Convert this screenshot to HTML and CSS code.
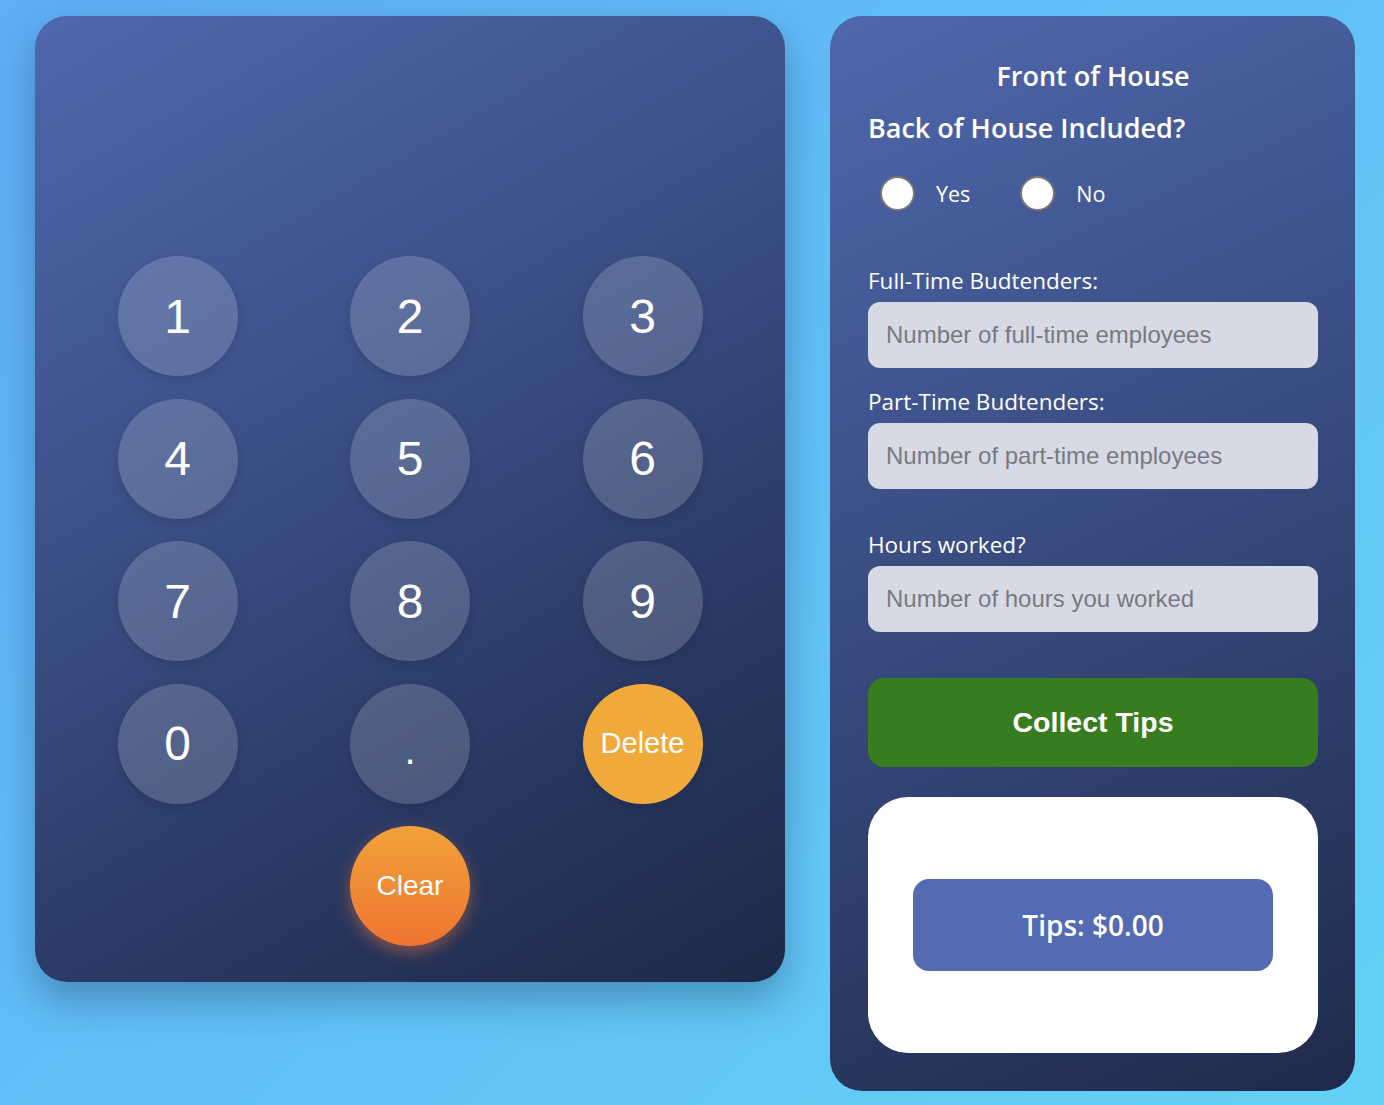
FILE: index.html
```html
<!DOCTYPE html>
<html lang="en">
<head>
<meta charset="utf-8">
<title>Tip Calculator</title>
<link rel="stylesheet" href="styles.css">
</head>
<body>
<main class="app">
  <section class="keypad-panel">
    <div class="display"></div>
    <div class="keypad">
      <button class="key">1</button>
      <button class="key">2</button>
      <button class="key">3</button>
      <button class="key">4</button>
      <button class="key">5</button>
      <button class="key">6</button>
      <button class="key">7</button>
      <button class="key">8</button>
      <button class="key">9</button>
      <button class="key">0</button>
      <button class="key key-dot">.</button>
      <button class="key key-delete">Delete</button>
      <span class="spacer"></span>
      <button class="key key-clear">Clear</button>
    </div>
  </section>

  <section class="form-panel">
    <h1 class="title">Front of House</h1>
    <h2 class="question">Back of House Included?</h2>
    <div class="radios">
      <label class="radio"><span class="radio-dot"></span>Yes</label>
      <label class="radio"><span class="radio-dot"></span>No</label>
    </div>

    <label class="field-label field-first">Full-Time Budtenders:</label>
    <input class="field" type="text" placeholder="Number of full-time employees">

    <label class="field-label">Part-Time Budtenders:</label>
    <input class="field" type="text" placeholder="Number of part-time employees">

    <label class="field-label field-hours">Hours worked?</label>
    <input class="field" type="text" placeholder="Number of hours you worked">

    <button class="collect">Collect Tips</button>

    <div class="result">
      <div class="tips">Tips: $0.00</div>
    </div>
  </section>
</main>
</body>
</html>
```

FILE: styles.css
```css
* { box-sizing: border-box; }

html, body {
  margin: 0;
  padding: 0;
}

body {
  min-height: 1105px;
  background: linear-gradient(135deg, #60aef6 0%, #62c4f6 60%, #64d1f5 100%);
  font-family: "Open Sans", "Noto Sans", sans-serif;
}

.app {
  display: flex;
  align-items: flex-start;
  gap: 45px;
  padding: 16px 29px 14px 35px;
}

/* ---------- keypad panel ---------- */
.keypad-panel {
  width: 750px;
  height: 966px;
  border-radius: 32px;
  padding: 40px 0 36px;
  background: linear-gradient(150deg, #4f68ad 0%, #3c5087 40%, #2b3a66 70%, #1e2948 100%);
  box-shadow: 0 18px 40px rgba(20, 40, 80, 0.35);
}

.display {
  height: 200px;
}

.keypad {
  display: grid;
  grid-template-columns: repeat(3, 232.5px);
  row-gap: 22.5px;
  justify-content: center;
  justify-items: center;
}

.key {
  width: 120px;
  height: 120px;
  border: none;
  border-radius: 50%;
  background: rgba(255, 255, 255, 0.17);
  color: #fff;
  font-family: "Liberation Sans", Arial, sans-serif;
  font-size: 48px;
  padding: 0;
  box-shadow: 0 4px 12px rgba(0, 0, 0, 0.12);
  cursor: pointer;
}

.key-dot {
  font-size: 40px;
  padding-top: 14px;
}

.key-delete {
  background: #f0aa3c;
  font-size: 29px;
}

.key-clear {
  background: linear-gradient(180deg, #f1a23a 0%, #ee7530 100%);
  font-size: 28px;
  box-shadow: 0 6px 16px rgba(240, 120, 50, 0.45);
}

/* ---------- form panel ---------- */
.form-panel {
  width: 525px;
  height: 1075px;
  border-radius: 32px;
  padding: 38px 37px 38px 38px;
  background: linear-gradient(155deg, #4f68ad 0%, #3c5087 40%, #2e3d6a 70%, #1f2a4b 100%);
  color: #fff;
  display: flex;
  flex-direction: column;
}

.title {
  margin: 0;
  text-align: center;
  font-size: 27px;
  font-weight: 600;
  line-height: 44px;
}

.question {
  margin: 8px 0 0;
  font-size: 27px;
  font-weight: 600;
  line-height: 44px;
}

.radios {
  display: flex;
  gap: 50px;
  margin: 26px 0 0 12px;
}

.radio {
  display: flex;
  align-items: center;
  gap: 21px;
  font-size: 21.5px;
  line-height: 34px;
}

.radio-dot {
  width: 35px;
  height: 35px;
  border-radius: 50%;
  background: #fff;
  border: 2px solid #767676;
}

.field-label {
  font-size: 22.5px;
  line-height: 30px;
  margin-top: 19px;
  margin-bottom: 6px;
}

.field-first { margin-top: 55px; }
.field-hours { margin-top: 41px; }

.field {
  width: 450px;
  height: 66px;
  border: none;
  border-radius: 12px;
  background: #d7dae5;
  padding: 0 18px;
  font-family: "Liberation Sans", Arial, sans-serif;
  font-size: 24px;
  color: #333;
}

.field::placeholder {
  color: #777a80;
}

.collect {
  margin-top: 46px;
  width: 450px;
  height: 90px;
  border: none;
  border-radius: 16px;
  background: #377d20;
  color: #fff;
  font-family: "Liberation Sans", Arial, sans-serif;
  font-size: 28.5px;
  font-weight: 700;
  cursor: pointer;
}

.result {
  margin-top: 30px;
  width: 450px;
  height: 256px;
  border-radius: 40px;
  background: #fff;
  display: flex;
  align-items: center;
  justify-content: center;
}

.tips {
  width: 360px;
  height: 92px;
  border-radius: 16px;
  background: #536bb3;
  color: #fff;
  display: flex;
  align-items: center;
  justify-content: center;
  font-size: 28px;
  font-weight: 600;
}
```
